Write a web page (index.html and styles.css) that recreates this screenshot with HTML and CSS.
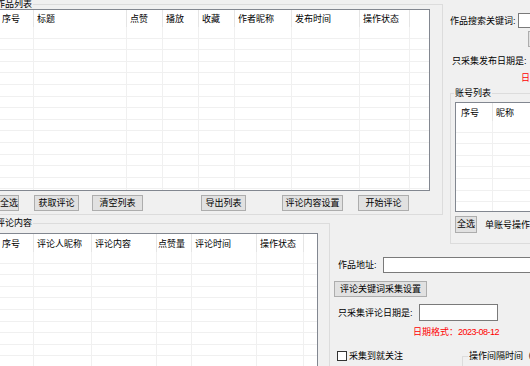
FILE: index.html
```html
<!DOCTYPE html>
<html lang="zh-CN">
<head>
<meta charset="utf-8">
<title>作品评论</title>
<link rel="stylesheet" href="styles.css">
</head>
<body>
<div class="app">
  <fieldset class="group group-works">
    <legend>作品列表</legend>
    <div class="list lv-works">
      <div class="lv-head cols-works">
        <div class="c first">序号</div>
        <div class="c">标题</div>
        <div class="c">点赞</div>
        <div class="c">播放</div>
        <div class="c">收藏</div>
        <div class="c">作者昵称</div>
        <div class="c">发布时间</div>
        <div class="c">操作状态</div>
        <div class="c last"></div>
      </div>
      <div class="lv-body cols-works">
        <div class="c"></div><div class="c"></div><div class="c"></div><div class="c"></div><div class="c"></div><div class="c"></div><div class="c"></div><div class="c"></div><div class="c last"></div>
      </div>
    </div>
    <div class="btn-row">
      <button class="btn b1">全选</button>
      <button class="btn b2">获取评论</button>
      <button class="btn b3">清空列表</button>
      <button class="btn b4">导出列表</button>
      <button class="btn b5">评论内容设置</button>
      <button class="btn b6">开始评论</button>
    </div>
  </fieldset>

  <aside class="side">
    <div class="kw-row">
      <span class="kw-label">作品搜索关键词:</span>
      <span class="textbox kw-input"></span>
    </div>
    <div class="mini-row"><span class="btn mini-btn"></span></div>
    <div class="pub-label">只采集发布日期是:</div>
    <div class="hint hint-side">日期格式：<span class="num">2023-08-12</span></div>
    <fieldset class="group group-acc">
      <legend>账号列表</legend>
      <div class="list lv-acc">
        <div class="lv-head cols-acc">
          <div class="c first">序号</div>
          <div class="c">昵称</div>
          <div class="c last"></div>
        </div>
        <div class="lv-body cols-acc">
          <div class="c"></div><div class="c"></div><div class="c last"></div>
        </div>
      </div>
      <div class="acc-foot">
        <button class="btn acc-all">全选</button>
        <span class="acc-text">单账号操作方式</span>
      </div>
    </fieldset>
  </aside>

  <fieldset class="group group-comments">
    <legend>评论内容</legend>
    <div class="list lv-comments">
      <div class="lv-head cols-comments">
        <div class="c first">序号</div>
        <div class="c">评论人昵称</div>
        <div class="c">评论内容</div>
        <div class="c tight">点赞量</div>
        <div class="c">评论时间</div>
        <div class="c">操作状态</div>
        <div class="c last"></div>
      </div>
      <div class="lv-body cols-comments">
        <div class="c"></div><div class="c"></div><div class="c"></div><div class="c"></div><div class="c"></div><div class="c"></div><div class="c last"></div>
      </div>
    </div>
  </fieldset>

  <section class="form">
    <div class="addr-row">
      <span class="addr-label">作品地址:</span>
      <span class="textbox addr-input"></span>
    </div>
    <button class="btn kw-btn">评论关键词采集设置</button>
    <div class="date-row">
      <span class="date-label">只采集评论日期是:</span>
      <span class="textbox date-input"></span>
    </div>
    <div class="hint hint-form">日期格式：<span class="num">2023-08-12</span></div>
    <div class="last-row">
      <label class="chk"><span class="box"></span><span>采集到就关注</span></label>
      <fieldset class="group group-interval">
        <legend>操作间隔时间（秒）</legend>
      </fieldset>
    </div>
  </section>
</div>
</body>
</html>
```
FILE: styles.css
```css
* { box-sizing: border-box; }
html, body { margin: 0; padding: 0; }
body {
  width: 530px;
  height: 366px;
  overflow: hidden;
  background: #f0f0f0;
  color: #000;
  font-family: "Liberation Sans", "Noto Sans CJK SC", sans-serif;
  font-size: 9px;
  line-height: 12px;
}

.app {
  display: grid;
  grid-template-columns: 342px 112px 96px;
  grid-template-rows: 216px 30px 140px;
  width: 550px;
  margin: -1px 0 0 -10px;
}

/* group boxes */
.group {
  margin: 0;
  padding: 0;
  min-width: 0;
  border: 1px solid #dcdcdc;
}
.group > legend {
  padding: 0 1px;
  font-size: 9px;
  line-height: 10px;
  white-space: nowrap;
}

/* buttons & inputs */
.btn {
  display: block;
  margin: 0;
  padding: 0;
  height: 16px;
  border: 1px solid #adadad;
  background: #e1e1e1;
  font: inherit;
  font-size: 9px;
  line-height: 14px;
  color: #000;
  text-align: center;
  white-space: nowrap;
  flex: none;
}
.textbox {
  display: block;
  flex: none;
  background: #fff;
  border: 1px solid #7a7a7a;
}

/* list views */
.list {
  display: flex;
  flex-direction: column;
  background: #fff;
  border: 1px solid #828790;
  overflow: hidden;
}
.lv-head {
  display: grid;
  flex: none;
  height: 17px;
}
.lv-head .c {
  border-right: 1px solid #e5e5e5;
  padding-left: 3px;
  padding-top: 1px;
  line-height: 17px;
  white-space: nowrap;
  overflow: hidden;
}
.lv-head .c.first { padding-left: 5px; }
.lv-head .c.tight { padding-left: 1px; }
.lv-head .c.last, .lv-body .c.last { border-right: 0; }
.lv-body {
  display: grid;
  flex: 1;
  background: repeating-linear-gradient(to bottom, #fff 0, #fff 10.6px, #f0f0f0 10.6px, #f0f0f0 11.6px);
}
.lv-body .c { border-right: 1px solid #f0f0f0; }

.cols-works { grid-template-columns: 37px 93px 36px 36px 36px 57px 68px 50px 1fr; }
.cols-comments { grid-template-columns: 37px 58px 65px 35px 65px 47px 1fr; }
.cols-acc { grid-template-columns: 37px 60px 1fr; }

/* works group */
.group-works {
  grid-column: 1 / 3;
  grid-row: 1;
  width: 453px;
  height: 216px;
  padding: 0 0 3px 4px;
}
.lv-works {
  width: 434px;
  height: 182px;
  margin-left: 1px;
}
.btn-row {
  display: flex;
  margin-top: 4px;
  height: 16px;
}
.b1 { margin-left: 4px; width: 20px; }
.b2 { margin-left: 15px; width: 45px; }
.b3 { margin-left: 13px; width: 51px; }
.b4 { margin-left: 58px; width: 45px; }
.b5 { margin-left: 36px; width: 61px; }
.b6 { margin-left: 15px; width: 51px; }

/* side panel */
.side {
  grid-column: 3;
  grid-row: 1 / 3;
  display: flex;
  flex-direction: column;
  align-items: flex-start;
  white-space: nowrap;
  min-width: 0;
}
.kw-row {
  display: flex;
  align-items: center;
  height: 15px;
  margin-top: 14px;
  padding-left: 6px;
}
.kw-label { width: 68px; flex: none; }
.kw-input { width: 40px; height: 15px; }
.mini-row {
  display: flex;
  margin-top: 3px;
  padding-left: 84px;
  width: 120px;
  flex: none;
}
.mini-btn { width: 20px; }
.pub-label {
  margin-top: 8px;
  padding-left: 8px;
}
.hint { color: #ff0000; white-space: nowrap; }
.hint .num { letter-spacing: -0.5px; }
.hint-side {
  margin-top: 5px;
  padding-left: 77px;
}
.group-acc {
  margin: 4px 0 0 6px;
  width: 120px;
  padding: 4px 0 10px 3px;
  flex: none;
}
.lv-acc {
  width: 115px;
  height: 110px;
  margin-left: 1px;
}
.lv-acc .lv-head { height: 18px; }
.lv-acc .lv-head .c { line-height: 18px; }
.acc-foot {
  display: flex;
  align-items: center;
  margin: 4px 0 0 1px;
  height: 17px;
}
.acc-all { width: 22px; height: 17px; line-height: 15px; }
.acc-text { margin-left: 8px; }

/* comments group */
.group-comments {
  grid-column: 1;
  grid-row: 2 / 4;
  margin-top: 3px;
  width: 340px;
  padding: 5px 0 0 4px;
}
.lv-comments {
  width: 322px;
  height: 140px;
  margin-left: 1px;
}
.lv-comments .lv-head { height: 18px; }
.lv-comments .lv-head .c { line-height: 18px; }

/* bottom form */
.form {
  grid-column: 2 / 4;
  grid-row: 3;
  display: flex;
  flex-direction: column;
  align-items: flex-start;
  white-space: nowrap;
}
.addr-row {
  display: flex;
  align-items: center;
  height: 16px;
  margin-top: 12px;
  padding-left: 6px;
}
.addr-label { width: 45px; flex: none; }
.addr-input { width: 160px; height: 16px; }
.kw-btn {
  margin: 8px 0 0 2px;
  width: 93px;
}
.date-row {
  display: flex;
  align-items: center;
  height: 17px;
  margin-top: 7px;
  padding-left: 6px;
}
.date-label { width: 81px; flex: none; }
.date-input { width: 79px; height: 17px; }
.hint-form {
  margin-top: 5px;
  padding-left: 81px;
}
.last-row {
  display: flex;
  align-items: flex-start;
  margin-top: 12px;
}
.chk {
  display: flex;
  align-items: center;
  gap: 2px;
  width: 130px;
  height: 12px;
  padding-left: 5px;
  flex: none;
}
.chk .box {
  width: 10px;
  height: 10px;
  background: #fff;
  border: 1px solid #333;
  flex: none;
}
.group-interval {
  margin-top: 1px;
  width: 100px;
  height: 40px;
  padding: 0 0 0 5px;
  flex: none;
}
```
